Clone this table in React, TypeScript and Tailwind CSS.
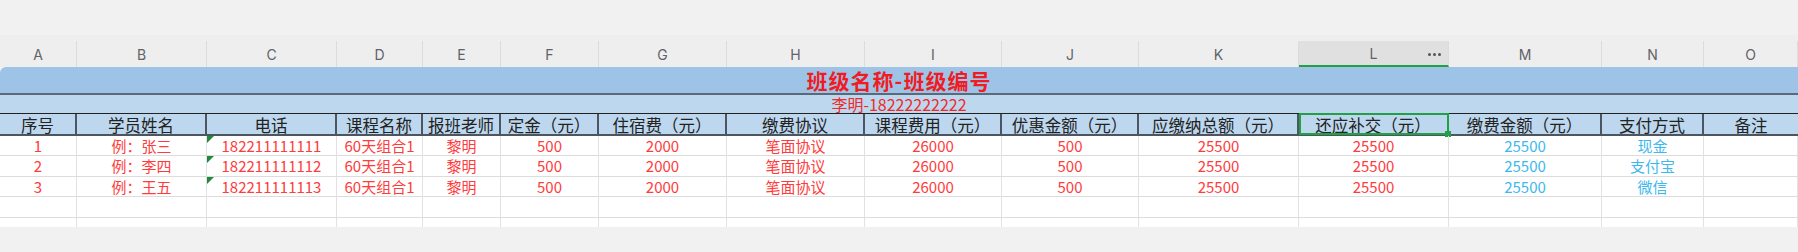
const gridCols =
  "grid grid-cols-[77px_130px_130px_86px_78px_98px_128px_138px_137px_137px_160px_150px_153px_102px_94px]";

const letters = ["A", "B", "C", "D", "E", "F", "G", "H", "I", "J", "K", "L", "M", "N", "O"];

const headers = [
  "序号",
  "学员姓名",
  "电话",
  "课程名称",
  "报班老师",
  "定金（元）",
  "住宿费（元）",
  "缴费协议",
  "课程费用（元）",
  "优惠金额（元）",
  "应缴纳总额（元）",
  "还应补交（元）",
  "缴费金额（元）",
  "支付方式",
  "备注",
];

const rows = [
  ["1", "例：张三", "182211111111", "60天组合1", "黎明", "500", "2000", "笔面协议", "26000", "500", "25500", "25500", "25500", "现金", ""],
  ["2", "例：李四", "182211111112", "60天组合1", "黎明", "500", "2000", "笔面协议", "26000", "500", "25500", "25500", "25500", "支付宝", ""],
  ["3", "例：王五", "182211111113", "60天组合1", "黎明", "500", "2000", "笔面协议", "26000", "500", "25500", "25500", "25500", "微信", ""],
];

const rowHeights = ["h-[20px]", "h-[21px]", "h-[20px]", "h-[21px]"];

function ColumnLetters() {
  return (
    <div className={`${gridCols} h-[32px] bg-[#eeeeee] pt-[6px]`}>
      {letters.map((l) => {
        const active = l === "L";
        return (
          <div
            key={l}
            className={`relative flex items-center justify-center border-r border-[#dcdcdc] text-[14px] text-[#5f6368] font-['Inter','Liberation_Sans',sans-serif] ${
              active ? "bg-[#e0e0e0] border-b-2 border-b-[#21a046]" : ""
            }`}
          >
            {l}
            {active && (
              <div className="absolute right-[7px] top-[12px] flex gap-[2px]">
                <span className="h-[3px] w-[3px] rounded-full bg-[#555]" />
                <span className="h-[3px] w-[3px] rounded-full bg-[#555]" />
                <span className="h-[3px] w-[3px] rounded-full bg-[#555]" />
              </div>
            )}
          </div>
        );
      })}
    </div>
  );
}

function HeaderRow() {
  return (
    <div className={`${gridCols} h-[22px] bg-[#bdd7ee] border-b-2 border-[#4d5660]`}>
      {headers.map((h, i) => (
        <div
          key={h}
          className={`relative flex items-end justify-center overflow-visible whitespace-nowrap text-[16.5px] leading-[20px] text-[#222] ${
            i < headers.length - 1 ? "border-r-2 border-[#4d5660]" : ""
          }`}
        >
          <span className="translate-y-[1px]">{h}</span>
          {i === 11 && (
            <>
              <div className="absolute -top-[1px] left-0 -right-[2px] -bottom-[1px] border-2 border-[#21a046]" />
              <div className="absolute -right-[4px] -bottom-[3px] h-[6px] w-[6px] bg-[#21a046]" />
            </>
          )}
        </div>
      ))}
    </div>
  );
}

function DataRow({ cells, height }: { cells: string[]; height: string }) {
  return (
    <div className={`${gridCols} ${height} border-b border-[#dcdcdc] bg-white`}>
      {cells.map((c, i) => (
        <div
          key={i}
          className={`relative flex items-center justify-center whitespace-nowrap text-[15px] leading-[20px] border-r border-[#e2e2e2] ${
            i === 12 || i === 13 ? "text-[#3cb8ee]" : "text-[#ff3b3b]"
          }`}
        >
          {i === 2 && c !== "" && (
            <svg className="absolute left-0 top-0" width="7" height="7" viewBox="0 0 7 7">
              <polygon points="0,0 7,0 0,7" fill="#1e8a3a" />
            </svg>
          )}
          {c}
        </div>
      ))}
    </div>
  );
}

export default function App() {
  return (
    <div className="w-[1798px] h-[252px] bg-[#f1f1f1] overflow-hidden font-['Noto_Sans_CJK_SC','Liberation_Sans',sans-serif]">
      <div className="h-[35px]" />
      <ColumnLetters />
      <div className="h-[28px] rounded-tl-[6px] bg-[#9dc3e6] border-b-2 border-[#5b6978] flex items-center justify-center">
        <span className="text-[21px] leading-[22px] font-bold text-[#f01c24] tracking-[1px]">
          班级名称-班级编号
        </span>
      </div>
      <div className="h-[19px] bg-[#bdd7ee] border-b border-[#222] flex items-center justify-center">
        <span className="text-[16px] leading-[17px] text-[#f02a2a]">李明-18222222222</span>
      </div>
      <HeaderRow />
      {rows.map((r, i) => (
        <DataRow key={i} cells={r} height={rowHeights[i]} />
      ))}
      <DataRow cells={Array(15).fill("")} height={rowHeights[3]} />
      <div className={`${gridCols} h-[9px] bg-white`}>
        {letters.map((l) => (
          <div key={l} className="border-r border-[#e2e2e2]" />
        ))}
      </div>
    </div>
  );
}
